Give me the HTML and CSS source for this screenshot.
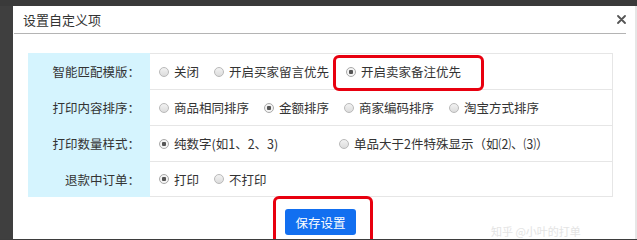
FILE: index.html
```html
<!DOCTYPE html>
<html lang="zh-CN">
<head>
<meta charset="utf-8">
<title>设置自定义项</title>
<link rel="stylesheet" href="styles.css">
</head>
<body>
<div class="top-strip"></div>
<div class="stage">
  <div class="gutter-left"></div>
  <div class="modal">
    <div class="modal-header">
      <span class="modal-title">设置自定义项</span>
      <span class="close" aria-label="关闭">
        <svg width="9" height="9" viewBox="0 0 9 9"><path d="M1 1 L8 8 M8 1 L1 8" stroke="#555" stroke-width="1.8" stroke-linecap="round"/></svg>
      </span>
    </div>
    <div class="modal-body">
      <div class="form-table">
        <div class="cell-label">智能匹配模版：</div>
        <div class="cell-value">
          <label class="opt"><input type="radio" name="r1"><span>关闭</span></label>
          <label class="opt"><input type="radio" name="r1"><span>开启买家留言优先</span></label>
          <label class="opt opt-shift"><input type="radio" name="r1" checked><span>开启卖家备注优先</span></label>
        </div>
        <div class="cell-label">打印内容排序：</div>
        <div class="cell-value">
          <label class="opt"><input type="radio" name="r2"><span>商品相同排序</span></label>
          <label class="opt"><input type="radio" name="r2" checked><span>金额排序</span></label>
          <label class="opt"><input type="radio" name="r2"><span>商家编码排序</span></label>
          <label class="opt"><input type="radio" name="r2"><span>淘宝方式排序</span></label>
        </div>
        <div class="cell-label">打印数量样式：</div>
        <div class="cell-value">
          <label class="opt opt-wide"><input type="radio" name="r3" checked><span>纯数字(如1、2、3)</span></label>
          <label class="opt"><input type="radio" name="r3"><span>单品大于2件特殊显示（如⑵、⑶）</span></label>
        </div>
        <div class="cell-label cell-last">退款中订单：</div>
        <div class="cell-value cell-last">
          <label class="opt"><input type="radio" name="r4" checked><span>打印</span></label>
          <label class="opt"><input type="radio" name="r4"><span>不打印</span></label>
        </div>
      </div>
      <div class="actions">
        <button class="btn-primary" type="button">保存设置</button>
      </div>
    </div>
    <div class="mark mark-option"></div>
    <div class="mark mark-button"></div>
    <div class="watermark">知乎 @小叶的打单</div>
  </div>
  <div class="gutter-right"></div>
</div>
</body>
</html>
```

FILE: styles.css
```css
html, body {
  margin: 0;
  padding: 0;
  overflow: hidden;
}
body {
  width: 637px;
  height: 239px;
  background: #3d3d3d;
  font-family: "Noto Sans CJK SC", "Noto Sans", sans-serif;
  color: #333;
}
.top-strip {
  height: 6px;
  background: #3a3a3a;
}
.stage {
  display: flex;
  height: 233px;
  overflow: hidden;
}
.gutter-left {
  width: 13px;
  flex: none;
  background: #3f3f3f;
}
.gutter-right {
  flex: 1;
  background: #e6e6e6;
}
.modal {
  position: relative;
  width: 622px;
  flex: none;
  background: #fff;
  overflow: hidden;
}
.modal-header {
  height: 27px;
  margin: 0 9px 0 1px;
  padding-left: 9px;
  border-bottom: 1px solid #b4b4b4;
  display: flex;
  align-items: center;
  justify-content: space-between;
}
.modal-title {
  font-size: 13px;
  line-height: 1;
  color: #333;
}
.close {
  display: flex;
  align-items: center;
}
.modal-body {
  padding: 19px 0 0 15px;
}
.form-table {
  width: 585px;
  display: grid;
  grid-template-columns: 122px 1fr;
  grid-auto-rows: 36px;
  font-size: 12.5px;
}
.cell-label {
  background: #d5f4fe;
  display: flex;
  align-items: center;
  justify-content: flex-end;
  padding-right: 10px;
}
.cell-value {
  border-top: 1px solid #e6e6e6;
  border-right: 1px solid #e6e6e6;
  display: flex;
  align-items: center;
  padding-left: 9px;
}
.cell-value.cell-last {
  border-bottom: 1px solid #e6e6e6;
}
.opt {
  display: inline-flex;
  align-items: center;
  margin-right: 15px;
  white-space: nowrap;
}
.opt-shift {
  margin-left: 2px;
}
.opt-wide {
  width: 165px;
}
.opt input {
  appearance: none;
  -webkit-appearance: none;
  width: 10px;
  height: 10px;
  margin: 0 5px 0 0;
  border: 1px solid #b9b9b9;
  border-radius: 50%;
  background: linear-gradient(#f2f2f2, #dcdcdc);
  box-sizing: border-box;
}
.opt input:checked {
  background: radial-gradient(circle, #555 0 2px, #f4f4f4 2.5px);
  border-color: #a9a9a9;
}
.actions {
  width: 585px;
  display: flex;
  justify-content: center;
  margin-top: 12px;
}
.btn-primary {
  height: 26px;
  padding: 0 10px;
  border: none;
  border-radius: 3px;
  background: #126ff0;
  color: #fff;
  font-family: "Noto Sans CJK SC", sans-serif;
  font-size: 12.5px;
}
.mark {
  position: absolute;
  box-sizing: border-box;
  border: 3px solid #e8000f;
  border-radius: 6px;
}
.mark-option {
  left: 320px;
  top: 49px;
  width: 151px;
  height: 36px;
}
.mark-button {
  left: 260px;
  top: 190px;
  width: 100px;
  height: 60px;
}
.watermark {
  position: absolute;
  left: 478px;
  top: 219px;
  font-size: 11px;
  line-height: 13px;
  color: #e4e4e4;
  white-space: nowrap;
}
```
